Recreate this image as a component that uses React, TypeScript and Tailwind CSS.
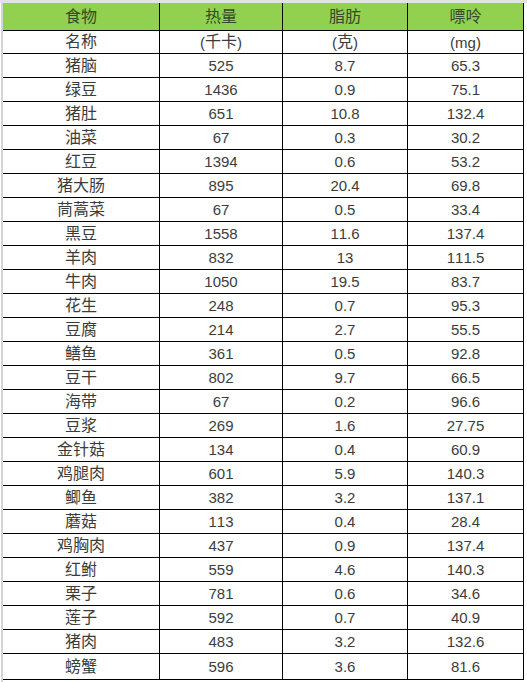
import React from "react";

const rows: [string, string, string, string][] = [
  ["猪脑", "525", "8.7", "65.3"],
  ["绿豆", "1436", "0.9", "75.1"],
  ["猪肚", "651", "10.8", "132.4"],
  ["油菜", "67", "0.3", "30.2"],
  ["红豆", "1394", "0.6", "53.2"],
  ["猪大肠", "895", "20.4", "69.8"],
  ["茼蒿菜", "67", "0.5", "33.4"],
  ["黑豆", "1558", "11.6", "137.4"],
  ["羊肉", "832", "13", "111.5"],
  ["牛肉", "1050", "19.5", "83.7"],
  ["花生", "248", "0.7", "95.3"],
  ["豆腐", "214", "2.7", "55.5"],
  ["鳝鱼", "361", "0.5", "92.8"],
  ["豆干", "802", "9.7", "66.5"],
  ["海带", "67", "0.2", "96.6"],
  ["豆浆", "269", "1.6", "27.75"],
  ["金针菇", "134", "0.4", "60.9"],
  ["鸡腿肉", "601", "5.9", "140.3"],
  ["鲫鱼", "382", "3.2", "137.1"],
  ["蘑菇", "113", "0.4", "28.4"],
  ["鸡胸肉", "437", "0.9", "137.4"],
  ["红鲋", "559", "4.6", "140.3"],
  ["栗子", "781", "0.6", "34.6"],
  ["莲子", "592", "0.7", "40.9"],
  ["猪肉", "483", "3.2", "132.6"],
  ["螃蟹", "596", "3.6", "81.6"],
];

const cjk = /[\u4e00-\u9fff]/;

function Row({ cells, h, header }: { cells: string[]; h: string; header?: boolean }) {
  return (
    <div
      className={`grid grid-cols-[157px_123px_125px_116px] border-b border-black ${h} ${
        header ? "bg-[#92d050] text-[#34492b]" : "bg-white text-[#3c3c3c]"
      }`}
    >
      {cells.map((c, i) => (
        <div key={i} className="flex items-center justify-center border-r border-black leading-none">
          {c.split("").map((ch, j) =>
            cjk.test(ch) ? (
              <span key={j} className="text-[16px]">
                {ch}
              </span>
            ) : (
              <span key={j}>{ch}</span>
            )
          )}
        </div>
      ))}
    </div>
  );
}

export default function App() {
  return (
    <div
      className="w-[527px] h-[682px] bg-white overflow-hidden flex flex-col text-[15px]"
      style={{ fontFamily: '"Liberation Sans", "Noto Sans CJK SC", sans-serif' }}
    >
      <div className="h-[3px] bg-[#e3e3e3] shrink-0" />
      <div className="flex flex-1">
        <div className="w-[3px] shrink-0 flex">
          <div className="w-[1px] bg-white" />
          <div className="w-[2px] bg-[#d4d4d4]" />
        </div>
        <div className="flex flex-col w-[521px]">
          <Row cells={["食物", "热量", "脂肪", "嘌呤"]} h="h-[28px]" header />
          <Row cells={["名称", "(千卡)", "(克)", "(mg)"]} h="h-[23px]" />
          {rows.map((r, i) => (
            <Row key={i} cells={r} h={i === rows.length - 1 ? "h-[26px]" : "h-[24px]"} />
          ))}
        </div>
        <div className="flex-1 bg-white" />
      </div>
    </div>
  );
}
